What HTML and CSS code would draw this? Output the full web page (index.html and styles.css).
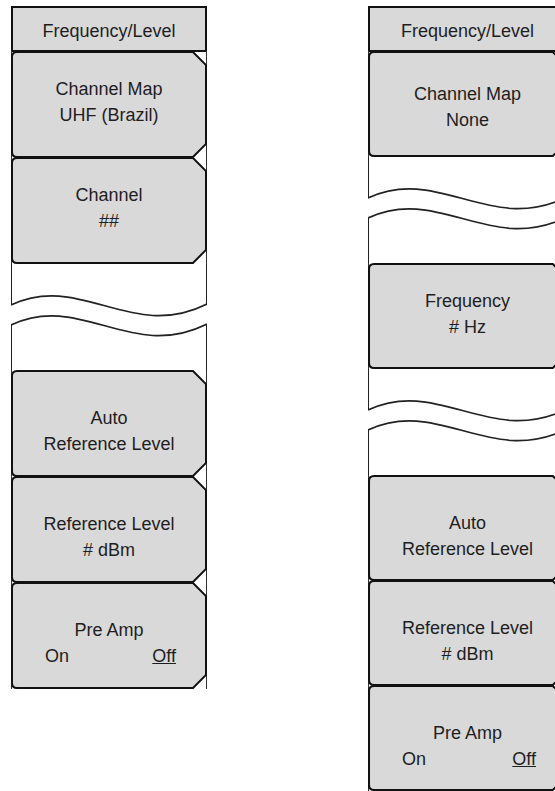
FILE: index.html
```html
<!DOCTYPE html>
<html lang="en">
<head>
<meta charset="utf-8">
<title>Frequency/Level menus</title>
<link rel="stylesheet" href="styles.css">
</head>
<body>
<main class="page">
  <section class="panel panel-a">
    <div class="title">Frequency/Level</div>
    <div class="key"><span>Channel Map</span><span>UHF (Brazil)</span></div>
    <div class="key"><span>Channel</span><span>##</span></div>
    <div class="break"></div>
    <div class="key low"><span>Auto</span><span>Reference Level</span></div>
    <div class="key low"><span>Reference Level</span><span># dBm</span></div>
    <div class="key low"><span>Pre Amp</span><span class="toggle"><span>On</span><u>Off</u></span></div>
  </section>
  <section class="panel panel-b">
    <div class="title">Frequency/Level</div>
    <div class="key mid"><span>Channel Map</span><span>None</span></div>
    <div class="break"></div>
    <div class="key"><span>Frequency</span><span># Hz</span></div>
    <div class="break"></div>
    <div class="key low"><span>Auto</span><span>Reference Level</span></div>
    <div class="key low"><span>Reference Level</span><span># dBm</span></div>
    <div class="key low"><span>Pre Amp</span><span class="toggle"><span>On</span><u>Off</u></span></div>
  </section>
</main>
</body>
</html>
```

FILE: styles.css
```css
html, body {
  margin: 0;
  padding: 0;
  background: #ffffff;
  overflow: hidden;
}

body {
  font-family: "Liberation Sans", Arial, sans-serif;
  color: #1e1e1e;
}

.page {
  display: flex;
  gap: 161px;
  padding: 6px 0 0 11px;
  width: max-content;
}

.panel {
  flex-shrink: 0;
  width: 196px;
  display: flex;
  flex-direction: column;
}

.panel-b {
  width: 199px;
}

.title {
  box-sizing: border-box;
  height: 46px;
  padding-top: 5px;
  border: 2px solid #111111;
  background: #d9d9d9;
  display: flex;
  align-items: center;
  justify-content: center;
  font-size: 18px;
}

.key {
  box-sizing: border-box;
  height: 106px;
  margin-top: -1px;
  padding-top: 25px;
  display: flex;
  flex-direction: column;
  align-items: center;
  font-size: 18px;
  line-height: 26px;
  background: url("data:image/svg+xml,<svg xmlns='http://www.w3.org/2000/svg' viewBox='0 0 196 106' preserveAspectRatio='none'><path d='M0.5 0V106M195.5 0V106' stroke='%23333333' fill='none'/><path d='M6 1H182L195 14V92L182 105H6Q1 105 1 100V6Q1 1 6 1Z' fill='%23d9d9d9' stroke='%23111111' stroke-width='2'/></svg>") 0 0 / 100% 100% no-repeat;
}

.panel-a .key {
  height: 107px;
}

.break + .key {
  margin-top: 0;
}

.key.mid {
  padding-top: 30px;
}

.key.low {
  padding-top: 35px;
}

.toggle {
  align-self: stretch;
  display: flex;
  justify-content: space-between;
  padding: 0 31px 0 34px;
}

.break {
  height: 106px;
  background: url("data:image/svg+xml,<svg xmlns='http://www.w3.org/2000/svg' viewBox='0 0 196 106' preserveAspectRatio='none' fill='none' stroke='%23222222'><path d='M0.5 0V41M195.5 0V40M0.5 61V106M195.5 60V106'/><path d='M0 41C70 8 120 78 196 40M0 61C70 28 120 98 196 60' stroke-width='1.6'/></svg>") 0 0 / 100% 100% no-repeat;
}
```
